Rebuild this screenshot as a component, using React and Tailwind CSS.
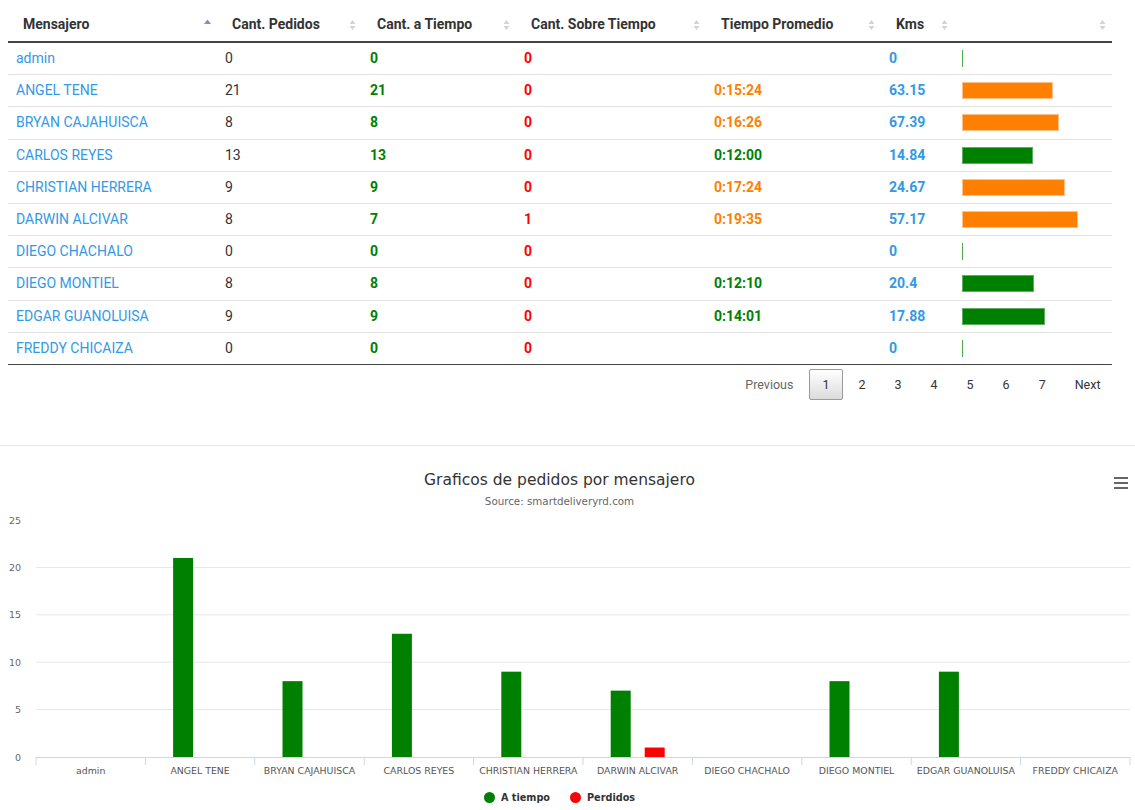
import React from "react";

const rows = [
  { n: "admin", p: 0, t: 0, s: 0, time: "", secs: 0, km: "0" },
  { n: "ANGEL TENE", p: 21, t: 21, s: 0, time: "0:15:24", secs: 924, km: "63.15" },
  { n: "BRYAN CAJAHUISCA", p: 8, t: 8, s: 0, time: "0:16:26", secs: 986, km: "67.39" },
  { n: "CARLOS REYES", p: 13, t: 13, s: 0, time: "0:12:00", secs: 720, km: "14.84" },
  { n: "CHRISTIAN HERRERA", p: 9, t: 9, s: 0, time: "0:17:24", secs: 1044, km: "24.67" },
  { n: "DARWIN ALCIVAR", p: 8, t: 7, s: 1, time: "0:19:35", secs: 1175, km: "57.17" },
  { n: "DIEGO CHACHALO", p: 0, t: 0, s: 0, time: "", secs: 0, km: "0" },
  { n: "DIEGO MONTIEL", p: 8, t: 8, s: 0, time: "0:12:10", secs: 730, km: "20.4" },
  { n: "EDGAR GUANOLUISA", p: 9, t: 9, s: 0, time: "0:14:01", secs: 841, km: "17.88" },
  { n: "FREDDY CHICAIZA", p: 0, t: 0, s: 0, time: "", secs: 0, km: "0" },
];

const headers = [
  { label: "Mensajero", sorted: true },
  { label: "Cant. Pedidos" },
  { label: "Cant. a Tiempo" },
  { label: "Cant. Sobre Tiempo" },
  { label: "Tiempo Promedio" },
  { label: "Kms" },
  { label: "" },
];

function SortIcon({ sorted }) {
  if (sorted) {
    return (
      <svg width="7" height="12" viewBox="0 0 7 12" className="shrink-0">
        <polygon points="0,5 3.5,0.5 7,5" fill="#8585e0" />
      </svg>
    );
  }
  return (
    <svg width="7" height="12" viewBox="0 0 7 12" className="shrink-0">
      <polygon points="0.5,5 3.5,1 6.5,5" fill="#d4d4d4" />
      <polygon points="0.5,7 3.5,11 6.5,7" fill="#d4d4d4" />
    </svg>
  );
}

const grid = "grid grid-cols-[209px_145px_154px_190px_175px_73px_158px]";

function Table() {
  return (
    <div className="w-[1104px] font-['Roboto',sans-serif] text-[14px]">
      <div className={`${grid} h-[43px] border-b-2 border-[#444]`}>
        {headers.map((h, i) => (
          <div key={i} className="flex items-center justify-between pt-[8px] pl-[15px] pr-[6px] font-bold text-[#333]">
            <span>{h.label}</span>
            <SortIcon sorted={h.sorted} />
          </div>
        ))}
      </div>
      {rows.map((r, i) => {
        const late = r.secs > 900;
        const col = late ? "#ff8000" : "#008000";
        const w = r.secs ? r.secs * 0.0987 : 0;
        return (
          <div
            key={i}
            className={`${grid} h-[32.2px] items-center border-b ${i === rows.length - 1 ? "border-[#444]" : "border-[#e2e2e2]"}`}
          >
            <div className="pl-[8px] text-[#3399e6]">{r.n}</div>
            <div className="pl-[8px] text-[#333]">{r.p}</div>
            <div className="pl-[8px] font-bold text-[#008000]">{r.t}</div>
            <div className="pl-[8px] font-bold text-[#ff0000]">{r.s}</div>
            <div className="pl-[8px] font-bold" style={{ color: col }}>{r.time}</div>
            <div className="pl-[8px] font-bold text-[#3399e6]">{r.km}</div>
            <div className="pl-[8px] flex items-center">
              {r.secs ? (
                <div className="h-[17px] border" style={{ width: w, background: col, borderColor: late ? "#ffc08a" : "#5fae5f" }} />
              ) : (
                <div className="h-[17px] w-[1px] bg-[#4caf50]" />
              )}
            </div>
          </div>
        );
      })}
    </div>
  );
}

function Pagination() {
  const btn = "ml-[2px] px-[12.5px] py-[7px] leading-[15px] border border-transparent rounded-[2px] text-[12.5px]";
  return (
    <div className="flex justify-end pt-[4px] w-[1106px] font-['Roboto',sans-serif]">
      <div className={`${btn} text-[#666]`}>Previous</div>
      <div className={`${btn} text-[#333] !border-[#9a9a9a] bg-gradient-to-b from-white to-[#dcdcdc]`}>1</div>
      {[2, 3, 4, 5, 6, 7].map((n) => (
        <div key={n} className={`${btn} text-[#333]`}>{n}</div>
      ))}
      <div className={`${btn} text-[#333]`}>Next</div>
    </div>
  );
}

const cats = rows.map((r) => r.n);

function Chart() {
  const left = 36;
  const right = 1130;
  const cw = (right - left) / 10;
  const base = 758;
  const unit = 9.48;
  const yTicks = [0, 5, 10, 15, 20, 25];
  return (
    <svg width="1135" height="270" viewBox="0 509 1135 270" className="block" style={{ fontFamily: "'DejaVu Sans', sans-serif" }}>
      {[5, 10, 15, 20].map((v) => (
        <line key={v} x1={left} x2={right} y1={base - v * unit} y2={base - v * unit} stroke="#e6e6e6" strokeWidth="1" />
      ))}
      {yTicks.map((v) => (
        <text key={v} x={21} y={base - v * unit + 3.5} textAnchor="end" fontSize="9.5" fill="#666">{v}</text>
      ))}
      <line x1={left} x2={right} y1={base + 0.5} y2={base + 0.5} stroke="#ccd6eb" strokeWidth="1" />
      {Array.from({ length: 11 }).map((_, i) => (
        <line key={i} x1={left + i * cw} x2={left + i * cw} y1={base} y2={base + 8} stroke="#ccd6eb" strokeWidth="1" />
      ))}
      {rows.map((r, i) => {
        const c = left + i * cw + cw / 2;
        return (
          <g key={i}>
            {r.t > 0 && <rect x={c - 27} y={base - r.t * unit} width={20} height={r.t * unit} fill="#008000" />}
            {r.s > 0 && <rect x={c + 7} y={base - r.s * unit} width={20} height={r.s * unit} fill="#ff0000" />}
            <text x={c} y={774.5} textAnchor="middle" fontSize="9.4" fill="#555">{cats[i]}</text>
          </g>
        );
      })}
    </svg>
  );
}

export default function App() {
  return (
    <div className="w-[1135px] h-[810px] bg-white overflow-hidden">
      <div className="pl-[8px]">
        <Table />
        <Pagination />
      </div>
      <div className="mt-[45px] h-px bg-[#e6e6e6]" />
      <div className="relative pt-[25px] font-['DejaVu_Sans',sans-serif]">
        <div className="h-[18px] leading-[18px] text-center pr-[16px] text-[15.5px] text-[#333]">
          Graficos de pedidos por mensajero
        </div>
        <div className="mt-[5px] h-[14px] leading-[14px] text-center pr-[16px] text-[10.3px] text-[#666]">
          Source: smartdeliveryrd.com
        </div>
        <div className="absolute right-[7px] top-[31px] flex flex-col gap-[3px]">
          <div className="w-[14px] h-[2px] bg-[#666]" />
          <div className="w-[14px] h-[2px] bg-[#666]" />
          <div className="w-[14px] h-[2px] bg-[#666]" />
        </div>
        <Chart />
        <div className="mt-[13px] h-[14px] flex items-center justify-center pr-[16px] text-[9.7px] font-bold text-[#333] leading-[14px]">
          <span className="w-[11px] h-[11px] rounded-full bg-[#008000] mr-[6px]" />
          <span>A tiempo</span>
          <span className="w-[11px] h-[11px] rounded-full bg-[#ff0000] ml-[20px] mr-[6px]" />
          <span>Perdidos</span>
        </div>
      </div>
    </div>
  );
}
